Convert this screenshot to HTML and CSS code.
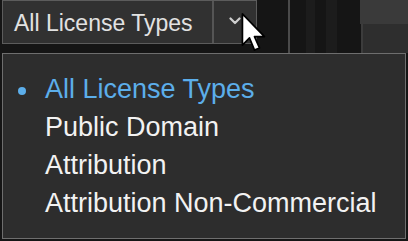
FILE: index.html
```html
<!DOCTYPE html>
<html>
<head>
    <title>License filter</title>
    <link rel="stylesheet" href="styles.css">
</head>
<body>
    <div class="toolbar">
        <div class="select">
            <span class="select-label">All License Types</span>
            <span class="select-toggle">
                <svg width="12" height="8" viewBox="0 0 12 8"><path d="M1.5 1.5 L6 6 L10.5 1.5" fill="none" stroke="#cfcfcf" stroke-width="2.2" stroke-linecap="round" stroke-linejoin="round"/></svg>
            </span>
        </div>
        <div class="gap-area">
            <span class="rule"></span>
            <span class="band band-a"></span>
            <span class="band band-b"></span>
        </div>
        <div class="side-panel">
            <div class="side-top"></div>
            <div class="side-bottom"></div>
        </div>
        <svg class="cursor" width="27" height="42" viewBox="0 0 19 29"><path d="M1 1 L1 23 L6 18 L9.5 26.5 L13 25 L9.5 17 L16.5 17 Z" fill="#fff" stroke="#000" stroke-width="1.2" stroke-linejoin="round"/></svg>
    </div>
    <ul class="menu">
        <li class="menu-item selected">All License Types</li>
        <li class="menu-item">Public Domain</li>
        <li class="menu-item">Attribution</li>
        <li class="menu-item">Attribution Non-Commercial</li>
    </ul>
</body>
</html>
```
FILE: styles.css
```css
body {
    margin: 0;
    padding: 0;
    background-color: #151515;
    font-family: "Liberation Sans", Arial, sans-serif;
    width: 408px;
    height: 241px;
    overflow: hidden;
}
.toolbar {
    position: relative;
    display: flex;
    height: 53px;
}
.select {
    display: flex;
    width: 253px;
    height: 42px;
    margin-left: 2px;
    border: 1px solid #5c5c5c;
    background-color: #313131;
}
.select-label {
    flex: 1;
    padding: 3px 0 0 11px;
    line-height: 39px;
    font-size: 23px;
    color: #e2e2e2;
    border-right: 2px solid #555;
}
.select-toggle {
    width: 42px;
    display: flex;
    align-items: center;
    justify-content: center;
    padding-bottom: 2px;
}
.gap-area {
    position: relative;
    width: 103px;
}
.rule {
    position: absolute;
    left: 31px;
    top: 0;
    width: 2px;
    height: 53px;
    background-color: #4a4a4a;
}
.band {
    position: absolute;
    top: 0;
    height: 53px;
    background-color: #1c1c1c;
}
.band-a { left: 49px; width: 9px; }
.band-b { left: 69px; width: 11px; }
.side-panel {
    flex: 1;
    display: flex;
    flex-direction: column;
}
.side-top {
    height: 24px;
    background-color: #3a3a3a;
}
.side-bottom {
    flex: 1;
    background-color: #2e2e2e;
    border-left: 2px solid #3c3c3c;
    margin-left: 1px;
}
.cursor {
    position: absolute;
    left: 241px;
    top: 12px;
}
.menu {
    list-style: none;
    margin: 0 2px;
    padding: 16px 0 0 0;
    height: 168px;
    background-color: #2d2d2d;
    border: 1px solid #6e6e6e;
}
.menu-item {
    position: relative;
    padding-left: 42px;
    font-size: 27px;
    line-height: 38px;
    color: #f2f2f2;
}
.menu-item.selected {
    color: #5caeea;
}
/* bullet for the active choice */
.menu-item.selected::before {
    content: "";
    position: absolute;
    left: 15px;
    top: 17px;
    width: 8px;
    height: 8px;
    border-radius: 50%;
    background-color: #5caeea;
}
```
